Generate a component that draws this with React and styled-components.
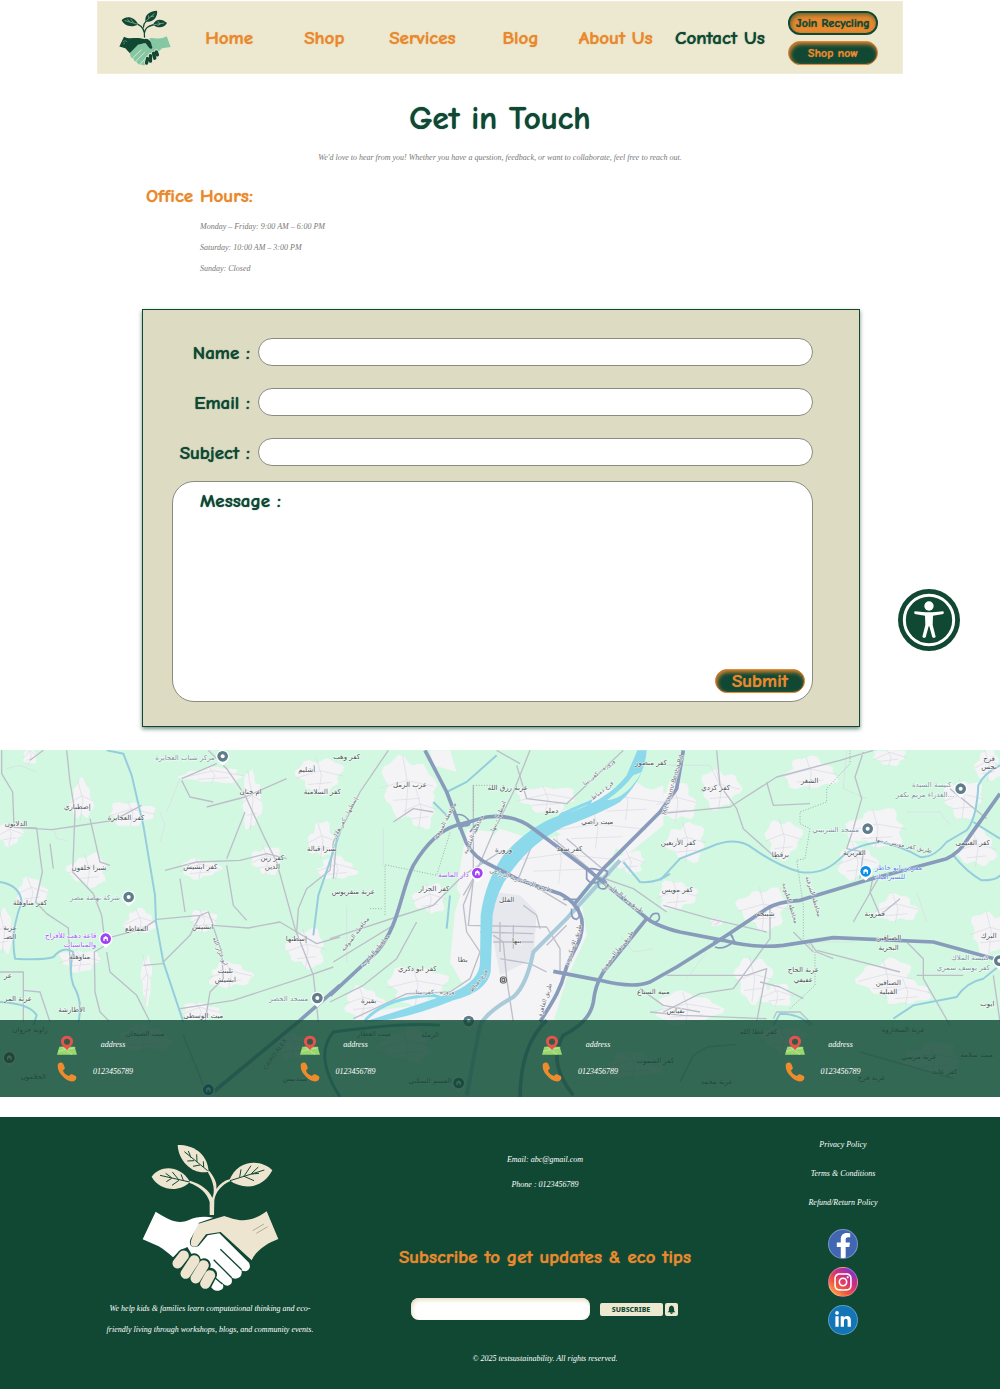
import React from "react";
import styled, { createGlobalStyle, css } from "styled-components";
import { FaFacebookF, FaInstagram, FaLinkedinIn } from "react-icons/fa";

const GREEN = "#104834";
const ORANGE = "#e8892f";
const CREAM = "#ede8d0";

const GlobalStyle = createGlobalStyle`
  * {
    box-sizing: border-box;
  }

  body {
    margin: 0;
    background: #fff;
    color: ${GREEN};
    font-family: Gabriola, "Liberation Serif", serif;
  }

  p, h1, h2, ul {
    margin: 0;
    padding: 0;
  }
`;

const comic = css`
  font-family: "Comic Sans MS", "Comic Neue", "Noto Sans", sans-serif;
  font-weight: 700;
  text-shadow: 0 0 1px currentColor;
`;

const script = css`
  font-family: Gabriola, "Liberation Serif", serif;
  font-style: italic;
  font-size: 8px;
`;

/* ---------- header ---------- */

const Header = styled.header`
  display: flex;
  align-items: center;
  height: 73px;
  margin: 1px 97px 0;
  padding: 1px 24px 0 21px;
  background: ${CREAM};
  border: 1px solid #f1ecd8;
`;

const Nav = styled.nav`
  flex: 1;
  display: grid;
  grid-template-columns: 94fr 96fr 100fr 96fr 94fr 114fr;
  margin: 0 11px;
`;

const NavLink = styled.a`
  ${comic}
  font-size: 19px;
  line-height: 24px;
  text-align: center;
  white-space: nowrap;
  text-decoration: none;
  color: ${({ $active }) => ($active ? GREEN : ORANGE)};
`;

const Actions = styled.div`
  display: flex;
  flex-direction: column;
  gap: 6px;
`;

const PillButton = styled.button`
  ${comic}
  width: 90px;
  height: 24px;
  padding: 0;
  border-radius: 12px;
  font-size: ${({ $large }) => ($large ? "19px" : "12px")};
  line-height: 20px;
  white-space: nowrap;
  color: ${({ $light }) => ($light ? GREEN : ORANGE)};
  background: ${({ $light }) => ($light ? ORANGE : GREEN)};
  border: ${({ $light }) => ($light ? `2px solid ${GREEN}` : `1px solid ${ORANGE}`)};
  box-shadow: inset 1px 2px 4px ${({ $light }) => ($light ? "rgba(16, 72, 52, 0.6)" : ORANGE)};
`;

/* ---------- intro ---------- */

const Title = styled.h1`
  ${comic}
  margin-top: 23px;
  font-size: 33px;
  line-height: 42px;
  text-align: center;
`;

const Lead = styled.p`
  ${script}
  margin-top: 9px;
  line-height: 20px;
  text-align: center;
  color: #777;
`;

const Hours = styled.section`
  margin: 16px 140px 0 146px;
`;

const HoursTitle = styled.h2`
  ${comic}
  font-size: 19px;
  line-height: 24px;
  color: ${ORANGE};
`;

const HoursList = styled.ul`
  ${script}
  margin-top: 8px;
  padding-left: 54px;
  list-style: none;
  line-height: 21px;
  color: #777;
`;

/* ---------- form ---------- */

const Form = styled.form`
  display: flex;
  flex-direction: column;
  gap: 22px;
  margin: 30px 140px 0 142px;
  padding: 28px 46px 24px 29px;
  background: #dddcc3;
  border: 1px solid ${GREEN};
  box-shadow: 0 2px 4px rgba(16, 72, 52, 0.6);
`;

const Field = styled.div`
  display: grid;
  grid-template-columns: 78px 1fr;
  column-gap: 8px;
  align-items: center;
`;

const Label = styled.label`
  ${comic}
  padding-top: 2px;
  font-size: 19px;
  line-height: 24px;
  text-align: right;
  white-space: nowrap;
`;

const TextInput = styled.input`
  width: 100%;
  height: 28px;
  padding: 0 14px;
  border: 1px solid #8b8b80;
  border-radius: 14px;
  background: #fff;
  font-size: 14px;
`;

const MessageBox = styled.div`
  display: flex;
  flex-direction: column;
  align-items: flex-start;
  min-height: 221px;
  margin-top: -7px;
  padding: 5px 7px 8px 27px;
  border: 1px solid #8b8b80;
  border-radius: 22px;
  background: #fff;
`;

const MessageInput = styled.textarea`
  flex: 1;
  width: 100%;
  border: 0;
  outline: 0;
  resize: none;
  background: transparent;
  font-size: 14px;
`;

const Submit = styled(PillButton)`
  align-self: flex-end;
`;

const AccessButton = styled.button`
  position: fixed;
  top: 589px;
  right: 40px;
  width: 62px;
  height: 62px;
  padding: 0;
  border: 0;
  border-radius: 50%;
  background: ${GREEN};

  svg {
    display: block;
  }
`;

/* ---------- map ---------- */

const MapSection = styled.section`
  display: grid;
  margin-top: 23px;

  > * {
    grid-area: 1 / 1;
  }
`;

const MapSvg = styled.svg`
  display: block;
  width: 100%;
  height: auto;
  font-family: "DejaVu Sans", sans-serif;
  font-size: 21px;
`;

const Branches = styled.div`
  z-index: 1;
  align-self: end;
  display: grid;
  grid-template-columns: repeat(4, 1fr);
  height: 77px;
  padding: 11px 0 0 30px;
  background: rgba(16, 72, 52, 0.82);
`;

const Branch = styled.address`
  display: grid;
  grid-template-columns: 20px 72px;
  grid-auto-rows: 27px;
  align-items: center;
  padding-left: 27px;
`;

const BranchText = styled.span`
  ${script}
  text-align: center;
  color: #fff;
`;

/* ---------- footer ---------- */

const Footer = styled.footer`
  display: grid;
  grid-template-columns: 332fr 338fr 258fr;
  min-height: 272px;
  margin-top: 20px;
  padding: 0 28px 0 44px;
  background: ${GREEN};
  color: #fff;
`;

const Column = styled.div`
  ${script}
  display: flex;
  flex-direction: column;
  align-items: center;
  padding-top: ${({ $top }) => $top};
  text-align: center;
`;

const About = styled.p`
  max-width: 222px;
  margin-top: 7px;
  line-height: 21px;
`;

const Line = styled.p`
  line-height: 25px;
`;

const FooterLink = styled.a`
  line-height: 29px;
  color: #fff;
  text-decoration: none;
`;

const SubscribeTitle = styled.h2`
  ${comic}
  margin-top: 48px;
  font-style: normal;
  font-size: 19px;
  line-height: 24px;
  white-space: nowrap;
  color: ${ORANGE};
`;

const SubscribeRow = styled.form`
  display: flex;
  align-items: center;
  margin-top: 29px;
`;

const SubscribeInput = styled.input`
  width: 179px;
  height: 22px;
  margin-right: 10px;
  padding: 0 10px;
  border: 0;
  border-radius: 8px;
  background: #fff;
  box-shadow: inset 1px 2px 4px #e5dcbc;
`;

const SubscribeButton = styled.button`
  display: grid;
  place-items: center;
  width: ${({ $wide }) => ($wide ? "63px" : "13px")};
  height: 13px;
  margin-right: 2px;
  padding: 0;
  border: 0;
  border-radius: 2px;
  background: ${CREAM};
  color: ${GREEN};
  font-family: "Noto Sans", sans-serif;
  font-size: 7px;
  font-weight: 800;
  line-height: 13px;
`;

const Copyright = styled.p`
  margin-top: 28px;
  line-height: 21px;
`;

const Socials = styled.div`
  display: flex;
  flex-direction: column;
  gap: 8px;
  margin-top: 12px;
`;

const SocialLink = styled.a`
  display: grid;
  place-items: ${({ $low }) => ($low ? "end center" : "center")};
  width: 30px;
  height: 30px;
  border: 1px solid rgba(255, 255, 255, 0.3);
  border-radius: 50%;
  overflow: hidden;
  color: #fff;
  background: ${({ $bg }) => $bg};
`;

const HeaderLogo = () => (
  <svg width="52" height="56" viewBox="86 28 157 168" role="img" aria-label="Logo">
    <g fill="none" stroke={GREEN} strokeWidth="4" strokeLinecap="round">
      <path d="M163 109C164 90 160 78 143 71M163 96C165 82 172 76 190 72M160 79C159 71 163 66 168 61" />
    </g>
    <g fill={GREEN}>
      <path d="M94 58C106 45 132 45 144 71C124 82 100 75 94 58Z" />
      <path d="M166 62C162 44 177 31 201 30C203 50 188 67 166 62Z" />
      <path d="M188 72C196 54 215 51 231 67C221 83 203 83 188 72Z" />
    </g>
    <path d="M103 59L143 71M111 55L120 63M121 54L130 66M168 60L193 38M175 44L176 53M182 47L192 46M190 72L222 67M203 61L209 69M202 75L212 69" stroke="#b9cdb0" strokeWidth="1.8" fill="none" />
    <path d="M101 108C118 117 132 109 151 113L165 116L152 138L119 158L105 143L87 138Z" fill={GREEN} />
    <path d="M230 107C211 119 192 111 178 112L186 144L201 158L216 143L242 139Z" fill="#86c7a3" />
    <path d="M119 157L144 132L163 127L178 139L203 153L194 171L166 193Q158 197 153 191Q143 194 139 184Q131 183 129 174Q120 172 119 157Z" fill="#86c7a3" />
    <path d="M128 172L154 147M137 182L164 155M151 190L173 165" stroke={CREAM} strokeWidth="2.5" />
    <path d="M148 127L166 114Q178 115 182 125L187 142Q181 149 174 138L166 128Q157 126 148 132Z" fill={GREEN} />
    <g stroke={CREAM} strokeWidth="14" strokeLinecap="round">
      <path d="M173 173L169 187M181 164L180 181M190 158L193 172M199 153L202 162" />
    </g>
    <g stroke={GREEN} strokeWidth="10" strokeLinecap="round">
      <path d="M172 174L169 188M181 165L181 182M190 158L194 173M199 154L202 163" />
    </g>
    <path d="M97 124l8-4 6 4M99 130l5-3" stroke="#86c7a3" strokeWidth="1.5" fill="none" />
  </svg>
);

const FooterLogo = () => (
  <svg width="137" height="147" viewBox="185 70 411 441" role="img" aria-label="Logo">
    <g fill="#ede5cf">
      <path d="M214 168C238 134 296 130 329 183C299 215 239 213 214 168Z" />
      <path d="M292 73C333 72 381 94 385 153C342 164 295 127 292 73Z" />
      <path d="M576 149C548 118 474 110 447 179C488 209 547 205 576 149Z" />
      <path d="M388 283V244C380 217 359 198 326 186L329 180C363 190 388 210 396 232C404 213 402 187 382 153L387 151C407 176 410 192 408 205C418 190 432 180 448 176L450 181C425 192 406 213 402 238L401 283Z" />
      <path d="M349 311L432 286C460 295 500 316 559 272L594 355C561 367 526 390 514 419L421 334L377 341L350 377Q328 383 332 361Z" />
    </g>
    <g fill="none" stroke={GREEN} strokeWidth="3">
      <path d="M239 164L328 184M256 158L274 171M276 154L295 177M302 161L309 179M258 183L274 173M275 194L296 179M312 93L382 150M324 91L332 111M349 101L350 124M321 121L341 120M338 137L359 133M369 122L370 139M552 148L449 180M534 139L513 159M512 135L492 165M482 146L478 170M536 158L514 160M521 180L489 166" />
    </g>
    <path d="M226 273C267 299 293 311 324 299C351 287 374 287 399 291L356 306L330 357C324 377 339 384 355 376L382 344L417 338L506 426Q514 443 499 451Q488 453 483 447Q489 471 465 474Q457 474 452 469Q461 491 442 495Q432 495 423 484Q438 505 415 510Q396 512 389 492L321 379L302 388L278 410C267 400 251 386 235 377L187 356Z" fill="#fff" />
    <path d="M420 386L484 447M400 417L454 471M397 465L426 490" stroke={GREEN} strokeWidth="4" />
    <path d="M517 330L551 310M528 338L562 318" stroke="#8b927b" strokeWidth="2" />
    <g stroke={GREEN} strokeWidth="40" strokeLinecap="round">
      <path d="M311 404L291 428M341 418L315 459M371 433L346 473M390 461L376 488" />
    </g>
    <g stroke="#ede5cf" strokeWidth="31" strokeLinecap="round">
      <path d="M310 405L292 428M342 419L316 459M370 434L346 473M389 464L375 489" />
    </g>
  </svg>
);

const AccessIcon = () => (
  <svg width="62" height="62" viewBox="0 0 186 186" aria-hidden="true">
    <circle cx="93" cy="93" r="74" fill="none" stroke="#fff" strokeWidth="9" />
    <circle cx="93" cy="51" r="14" fill="#fff" />
    <path d="M50 67L82 70H104L136 67Q139 71 136 75L105 80L104 108L113 143Q109 149 103 145L94 112H92L83 145Q77 149 73 143L82 108L81 80L50 75Q47 71 50 67Z" fill="#fff" />
  </svg>
);

const AddressIcon = () => (
  <svg width="20" height="20" viewBox="0 0 60 60" aria-hidden="true">
    <path d="M7 35H53L60 59H0Z" fill="#9ad86d" />
    <path d="M3 49L25 44L55 38M14 35L45 59" stroke="#c9efaa" strokeWidth="2" />
    <path d="M30 2C18 2 11 11 12 21C13 33 27 38 30 47C33 38 47 33 48 21C49 11 42 2 30 2Z" fill="#e5534f" />
    <circle cx="30" cy="20" r="9" fill="#315b45" />
  </svg>
);

const PhoneIcon = () => (
  <svg width="20" height="20" viewBox="0 0 60 60" aria-hidden="true">
    <path d="M3 5Q14-2 19 6L23 16Q25 21 18 25Q21 38 36 42Q40 35 45 37L56 42Q62 51 52 57Q36 62 19 45Q-2 25 3 5Z" fill="#ee8b2d" />
  </svg>
);

const BellIcon = () => (
  <svg width="9" height="9" viewBox="0 0 24 24" aria-hidden="true">
    <path d="M12 1C7 2 5 6 5 11V15L2 19H22L19 15V11C19 6 17 2 12 1ZM8 20C9 25 15 25 16 20Z" fill={GREEN} />
  </svg>
);

// [cx, cy, rx, ry] of the built-up areas
const towns = [
  [245, 165, 35, 60], [395, 205, 70, 38], [265, 375, 60, 50], [95, 440, 48, 42], [30, 265, 40, 36],
  [640, 90, 95, 24], [755, 165, 30, 90], [960, 90, 70, 55], [965, 285, 42, 55], [600, 370, 60, 30],
  [800, 345, 46, 44], [420, 530, 48, 38], [610, 525, 40, 34], [920, 610, 58, 60], [690, 690, 66, 40],
  [240, 645, 62, 34], [10, 560, 30, 66], [600, 800, 60, 28], [440, 700, 16, 75], [90, 30, 20, 30],
  [1220, 120, 80, 90], [1260, 190, 50, 60], [1010, 370, 60, 35], [1250, 720, 90, 60], [1290, 460, 50, 45],
  [1090, 770, 60, 45], [1640, 160, 90, 40], [1880, 170, 120, 55], [1790, 250, 150, 60], [1680, 340, 160, 75],
  [2030, 170, 60, 60], [2160, 130, 60, 60], [2060, 290, 60, 60], [2430, 85, 80, 50], [2350, 280, 55, 60],
  [2630, 250, 90, 60], [2570, 350, 60, 55], [2890, 160, 60, 60], [2930, 310, 60, 55], [2030, 450, 60, 45],
  [2290, 490, 75, 65], [2690, 490, 65, 42], [2970, 560, 60, 65], [2660, 700, 85, 60], [2720, 740, 70, 40],
  [2260, 700, 55, 70], [2330, 750, 50, 35], [2060, 790, 100, 50], [2670, 35, 50, 25], [2965, 60, 40, 50],
  [2150, 530, 20, 14], [1890, 350, 45, 35], [430, 880, 90, 40], [880, 900, 60, 40], [1220, 900, 80, 50],
  [1900, 960, 90, 40], [2350, 880, 70, 40], [2800, 940, 90, 50],
];

const blob = ([cx, cy, rx, ry], seed) =>
  Array.from({ length: 30 }, (_, i) => {
    const a = (i / 30) * Math.PI * 2;
    const r = 0.92 + 0.14 * Math.sin(seed * 2.3 + a * 3) + 0.11 * Math.sin(seed * 5.1 + a * 7);
    return `${Math.round(cx + Math.cos(a) * rx * r)},${Math.round(cy + Math.sin(a) * ry * r)}`;
  }).join(" ");

const lanes = [
  "M5 15V85L38 140L42 246L110 248L120 330L127 380L107 470L140 505L205 548L212 690",
  "M42 246L155 253L230 242L340 225L425 180",
  "M200 15L210 110L225 200L218 380L280 445L305 510L316 600L283 620L285 740L300 800L330 830",
  "M316 580L430 550L470 522L600 510L625 500L640 540L745 548L840 530L890 560L950 595L1020 575",
  "M625 15L680 70L735 150L790 270L830 350L885 550L940 690L955 830",
  "M680 340L735 200M495 375L590 350L720 345L800 325L860 340M620 185L735 155L860 100",
  "M545 100L650 55M545 105L570 155L640 170M890 560L895 490L920 430L990 375L1000 290L1020 250",
  "M640 545L665 620L670 700L630 740L615 830M490 650L570 570L600 510M430 660L490 655",
  "M320 620L330 680L410 750L450 830M130 15L90 45M150 295L160 370M270 220L300 350L330 360",
  "M680 360L700 480L740 525M540 400L555 500M540 790L700 765L900 700L1000 665M0 680H70V830M70 735L120 740L150 830",
  "M1165 15L1080 140L1010 280L1000 400M1590 15L1540 140L1480 260L1420 400L1390 450M1300 200L1240 190L1180 230",
  "M1420 120V400L1405 540L1640 545L1680 610L1680 680M990 580L1190 515L1300 480L1390 390L1500 320",
  "M1000 650L1180 540M1250 530L1190 640L1090 720L990 770M1490 15L1560 55M1550 60L1580 160L1700 175L1870 15",
  "M1690 200L1600 290L1555 400M1660 280L1780 380M1830 390L1700 280M1800 395L1900 430L2000 500",
  "M1060 820L1220 745L1350 740L1410 700L1440 620L1400 560L1390 480L1430 380",
  "M1480 570L1510 590L1520 700L1540 830M1500 640L1590 655L1640 680M1570 480L1610 510L1620 550",
  "M1980 205L2190 185L2330 95L2520 45L2620 15M2590 20L2565 95L2585 160L2560 250L2540 310L2590 320L2580 400",
  "M2150 15L2160 120L2210 190L2230 250L2330 340M2300 110L2320 180L2430 175M2620 390L2610 440L2640 510L2700 460",
  "M2310 490L2310 580L2200 730L2100 745L1990 800M2000 690L2240 690L2300 670L2270 830M2450 615L2700 680",
  "M2280 710L2340 725L2410 760M2440 620L2380 560M2430 590L2450 620L2500 640M2640 390L2560 530",
  "M2720 590L2770 640L2770 700L2850 840M2980 690L3000 830M1920 730L1990 780L2100 800M1950 800L2050 810L2300 820",
  "M2320 820L2330 800L2400 800L2440 840M2850 130L2960 220M2750 690L2890 690M1990 480L2130 520L2300 560",
  "M550 870L610 1020M2120 905L2080 930L2040 1010M2120 905L2210 897M2580 920L2860 1000",
  "M1440 560L1600 565M1500 530V620M1540 540V610M1480 590H1600M1600 420L1700 480M1700 540L1640 600",
];

const highways = [
  "M1275 15L1340 140L1390 270Q1405 320 1450 348L1560 405L1680 445Q1730 470 1745 520C1755 590 1710 620 1695 680C1680 740 1650 780 1620 830",
  "M990 750L1130 620C1200 540 1200 440 1240 360Q1300 260 1370 240L1460 215Q1540 205 1600 250L1760 370L1930 510Q1960 540 2040 560L2170 585Q2260 610 2350 600L2500 577L2800 590L3000 645",
  "M2050 15L2030 130L1980 200L1810 370L1720 480",
  "M1660 678L1800 705Q1900 730 1950 710L2030 665L2150 590L2300 490Q2330 470 2400 465L2600 405L2840 340Q2880 320 2900 285L3000 145",
  "M1940 520L1810 680Q1785 720 1780 770Q1770 830 1690 870Q1640 950 1720 1050",
  "M1020 720L900 825L640 1040",
  "M1640 825Q1560 900 1560 1060",
];

const loops = [
  "M1365 210Q1390 200 1410 230Q1410 250 1375 235ZM1375 250L1430 222M1410 260L1430 235",
  "M1760 375Q1770 365 1800 375Q1830 370 1820 390Q1780 430 1760 400ZM1795 405Q1790 435 1815 430Q1830 420 1810 400",
  "M1690 462H1735M1715 490Q1710 520 1730 522Q1745 515 1735 485M1950 520Q1955 500 1975 505Q1985 525 1965 530",
  "M2140 590L2190 565Q2200 570 2200 590Q2170 615 2145 605M2190 565L2210 598",
];

const canals = [
  "M0 410Q60 420 65 470Q30 560 45 640Q130 645 160 635Q190 600 220 620Q205 680 220 720Q250 770 235 830",
  "M320 15L370 25L395 90L430 240L465 450L468 530L490 650L550 830",
  "M0 770Q90 775 110 810L100 840M1020 260L955 450L940 570M2860 330Q2900 380 2945 405Q2990 405 3000 390",
  "M1980 405L2040 340L2130 305Q2210 270 2260 310Q2330 360 2400 380Q2470 390 2520 340Q2560 300 2640 290Q2700 300 2760 335Q2800 340 2840 290L2900 255Q2930 220 2935 120Q2950 85 3000 60",
  "M1870 350L1920 410Q1970 415 2010 385M2680 820L2740 780L2870 755Q2900 710 2950 700L3000 660M2920 230L3000 280M2320 840L2340 805Q2400 805 2430 840",
  "M1490 30L1400 110L1340 140M1340 550L1350 450M1300 170L1340 210",
];

// [x, y, text, colour]
const places = [
  [555, 44, "مركز شباب العجايزة", "#78909c"], [920, 80, "أشليم"], [752, 146, "ام خنان"], [967, 146, "كفر السلامية"],
  [232, 192, "إصطباري"], [378, 224, "كفر العجايزة"], [48, 242, "الدلاتون"], [267, 373, "شبرا خلفون"],
  [601, 370, "كفر ابشيش"], [817, 344, "كفر زين"], [817, 372, "الدين"], [965, 318, "شبرا قبالة"],
  [90, 478, "كفر مناوهلة"], [285, 465, "شركة نهضة مصر", "#78909c"], [212, 578, "قاعة دهب للأفراح", "#a855f7"],
  [240, 606, "والمناسبات", "#a855f7"], [410, 558, "المقاطع"], [608, 550, "ابشيش"], [889, 587, "إسطنها"],
  [239, 640, "مناوهلة"], [676, 682, "تلبنت"], [676, 710, "ابشيش"], [30, 555, "عزبة"], [30, 581, "الضـ"], [54, 768, "عزبة المر"],
  [215, 800, "الأطارشة"], [610, 817, "ميت الوسطى"], [866, 768, "مسجد الخضر", "#78909c"], [24, 699, "عز"],
  [1230, 126, "عرب الرمل"], [1523, 134, "عزبة رزق الله"], [1655, 203, "دملو"], [1792, 236, "ميت راضي"],
  [1953, 58, "كفر منصور"], [1708, 316, "كفر سعد"], [1511, 320, "ورورة"], [1360, 394, "دار الماسة", "#a855f7"],
  [1302, 438, "كفر الجزار"], [1060, 446, "عزبة منقريوس"], [1520, 471, "الفلل"], [1550, 593, "بنها"],
  [1388, 651, "بطا"], [1252, 676, "كفر ابو ذكري"], [1106, 773, "بقيرة"], [1960, 745, "منيه السباع"],
  [1040, 42, "كفر وهب"], [2147, 134, "كفر كردي"], [2429, 112, "الشغر"], [2795, 126, "كنيسة السيدة", "#78909c"],
  [2775, 154, "العذراء مريم بكفر...", "#78909c"], [2507, 260, "مسجد الشربيني", "#78909c"], [2035, 300, "كفر الأربعين"],
  [2341, 334, "برقطا"], [2563, 330, "العزيزية"], [2918, 298, "كفر الغنيمى"], [2696, 374, "معرض ابو خاطر", "#5b83e8"],
  [2670, 402, "للسيراميك", "#5b83e8"], [2032, 440, "كفر مويس"], [2296, 511, "شبنجة"], [2624, 512, "قمرونة"],
  [2666, 585, "الصنافين"], [2666, 613, "البحرية"], [2410, 681, "عزبة الحاج"], [2410, 709, "عفيفي"],
  [2665, 718, "الصنافين"], [2665, 746, "القبلية"], [2910, 644, "كنيسة الملاك", "#78909c"],
  [2890, 673, "كفر يوسف سمري", "#78909c"], [2966, 579, "البرك"], [2967, 46, "فرج"], [2967, 72, "نجس"],
  [2027, 802, "تفياس"], [2962, 782, "ايوب"], [90, 860, "زاوية جروان"], [435, 873, "ميت الصيحان"], [100, 1000, "الحلامون"],
  [1122, 873, "ميت العطار"], [1290, 875, "الرملة"], [885, 1008, "سندبيس"], [1290, 1013, "القسم السكني"],
  [1966, 952, "كفر الشموت"], [2276, 867, "كفر عطا الله"], [2710, 860, "عزبة السحاروة"], [2150, 1015, "عزبة محمد"],
  [2757, 940, "عزبة مرسي"], [2835, 985, "كفر عابد"], [2615, 1005, "عزبة فرج"], [2930, 936, "ميت سلامة"],
];

// [x, y, angle, text] of names that follow a road or a border
const roadNames = [
  [1070, 570, -52, "محافظة المنوفية"], [1130, 620, -50, "محافظة القليوبية"], [1340, 230, -62, "محافظة المنوفية"],
  [1425, 270, -66, "محافظة القليوبية"], [2365, 475, 73, "محافظة القليوبية"], [2435, 455, 73, "محافظة الشرقية"],
  [1040, 220, -62, "إسطنها - كفر هلال"], [1500, 215, -68, "اسطنها - بنها"], [1800, 85, -38, "ورورة - كفر بيتا"],
  [1305, 747, 0, "ورورة - كفر بيتا"], [1560, 410, 18, "طريق الإسكندرية الزراعي"], [1725, 600, -72, "طريق الإسكندرية"],
  [1855, 620, -52, "طريق بنها المنصورة"], [1870, 460, 38, "طريق بنها الزقازيق"], [2024, 120, -74, "Mit Ghamr-Benha Rd"],
  [2710, 305, 12, "طريق كفر مويس - بنها"], [655, 620, 68, "ابو عرار الله"], [1810, 140, -38, "فرع دمياط"], [1440, 710, -52, "فرع دمياط"],
  [1640, 765, -72, "طريق القاهرة"], [830, 930, -55, "CAIRO ALEX"],
];

const pins = [
  [668, 33, "#607d8b"], [386, 455, "#607d8b"], [317, 580, "#a142f4"], [952, 758, "#607d8b"], [1432, 383, "#a142f4"],
  [2882, 130, "#607d8b"], [2603, 250, "#607d8b"], [2597, 378, "#0b8de8"], [2998, 646, "#607d8b"], [1406, 827, "#607d8b"],
  [28, 937, "#7a2f2f"], [625, 1033, "#3949ab"], [1376, 1013, "#455a64"],
];

const AreaMap = () => (
  <MapSvg viewBox="0 14 3000 1041" role="img" aria-label="Map of Benha">
    <rect y="14" width="3000" height="1041" fill="#d3f8e2" />
    <g fill="#f4f3f6">
      {towns.map((town, i) => (
        <polygon key={i} points={blob(town, i)} />
      ))}
      <path d="M1365 500L1420 330L1500 250L1620 290L1760 240L1890 200L1820 380L1740 440L1760 570L1700 700L1660 830L1050 830L1100 800L1250 780L1390 720L1350 650Z" />
      <path d="M1400 250L1480 260L1480 420L1400 480L1370 430Z" />
      <path d="M1290 15H1350L1370 80L1300 60ZM1860 170L1990 120V240L1880 330L1790 270Z" />
    </g>
    <path d="M1480 440L1560 450L1610 500L1600 640L1500 690L1475 560Z" fill="#e6e8ee" />
    <g fill="none" stroke="#d9dbe2" strokeWidth="2">
      {towns.map(([x, y, rx, ry], i) => (
        <path key={i} d={`M${x - rx} ${y + 8}l${rx} -22l${rx} 16M${x - 12} ${y - ry}l16 ${ry}l-8 ${ry}M${x - rx / 2} ${y + ry / 2}l${rx} -6`} />
      ))}
      <path d="M20 70L60 60L110 80M160 250L170 280L200 285M480 200L495 240L480 290M540 100L500 200M2540 15L2530 130L2600 160M2000 60H2130L2160 120M2430 590H2560M1860 570L1900 620L1960 610M2720 200H2820L2850 240M2120 620L2060 700M2750 440L2780 530M1040 480V650M1150 250V360" />
    </g>
    <g fill="none" stroke="#bcbfc9" strokeWidth="4" strokeLinejoin="round">
      {lanes.map((d) => (
        <path key={d} d={d} />
      ))}
    </g>
    <path d="M1420 120H1490M1420 120V200M1350 262L1310 390L1155 358V510M1110 490H1150M2550 15V55L2480 130V170L2400 200V235L2430 250L2415 340L2390 345L2410 480V580L2445 615V720L2370 790" fill="none" stroke="#a0aab0" strokeWidth="3" strokeDasharray="3 5" />
    <g fill="none" stroke="#96cddd" strokeWidth="6">
      {canals.map((d) => (
        <path key={d} d={d} />
      ))}
    </g>
    <path d="M1912 15H1940Q1935 100 1860 170Q1800 205 1690 245Q1600 290 1540 370Q1490 430 1478 510L1472 680Q1460 740 1360 765Q1200 830 1090 830Q1280 770 1360 740Q1440 705 1440 650L1442 510Q1455 410 1510 330Q1590 240 1680 210Q1820 170 1880 90Z" fill="#8cd9eb" />
    <path d="M1925 80Q1880 160 1820 165Q1870 130 1900 90Z" fill="#d3f8e2" />
    <path d="M1095 825Q1160 755 1300 750L1350 765M1765 180L1770 170Q1710 195 1680 210" fill="none" stroke="#8cd9eb" strokeWidth="9" />
    <path d="M1860 345L1700 520L1600 620Q1580 720 1540 755Q1460 800 1440 840L1400 1050" fill="none" stroke="#a9cbd9" strokeWidth="12" />
    <g fill="none" stroke="#899bbb" strokeWidth="11" strokeLinejoin="round">
      {highways.map((d) => (
        <path key={d} d={d} />
      ))}
    </g>
    <path d="M1320 840Q1220 830 1000 860Q940 930 1020 1055" fill="none" stroke="#72aab5" strokeWidth="9" />
    <g fill="none" stroke="#899bbb" strokeWidth="5">
      {loops.map((d) => (
        <path key={d} d={d} />
      ))}
    </g>
    <g textAnchor="middle" stroke="#fff" strokeWidth="3" strokeOpacity="0.8" paintOrder="stroke">
      {places.map(([x, y, text, colour]) => (
        <text key={`${x}-${y}`} x={x} y={y} fill={colour || "#4b5357"}>
          {text}
        </text>
      ))}
      {roadNames.map(([x, y, angle, text]) => (
        <text key={`${x}-${y}`} transform={`translate(${x} ${y}) rotate(${angle})`} fontSize="18" fill="#6c7680">
          {text}
        </text>
      ))}
    </g>
    {pins.map(([x, y, colour]) => (
      <g key={`${x}-${y}`} transform={`translate(${x} ${y})`}>
        <path d="M0 28L-12 17A20 20 0 1 1 12 17Z" fill="#fff" />
        <circle r="16" fill={colour} />
        {colour === "#607d8b" ? <circle r="6" fill="#fff" /> : <path d="M-7 7V-3L0-8L7-3V7H3V1H-3V7Z" fill="#fff" />}
      </g>
    ))}
    <g transform="translate(1510 704)" fill="none" stroke="#555" strokeWidth="3">
      <rect x="-9" y="-9" width="18" height="18" rx="6" />
      <rect x="-4" y="-4" width="8" height="8" />
    </g>
  </MapSvg>
);

const links = ["Home", "Shop", "Services", "Blog", "About Us", "Contact Us"];
const fields = ["Name", "Email", "Subject"];
const branches = [1, 2, 3, 4];

const App = () => {
  return (
    <>
      <GlobalStyle />
      <Header>
        <HeaderLogo />
        <Nav>
          {links.map((link) => (
            <NavLink key={link} href="#" $active={link === "Contact Us"}>
              {link}
            </NavLink>
          ))}
        </Nav>
        <Actions>
          <PillButton type="button" $light>Join Recycling</PillButton>
          <PillButton type="button">Shop now</PillButton>
        </Actions>
      </Header>

      <main>
        <Title>Get in Touch</Title>
        <Lead>
          We'd love to hear from you! Whether you have a question, feedback, or want to collaborate, feel free to reach out.
        </Lead>

        <Hours>
          <HoursTitle>Office Hours:</HoursTitle>
          <HoursList>
            <li>Monday – Friday: 9:00 AM – 6:00 PM</li>
            <li>Saturday: 10:00 AM – 3:00 PM</li>
            <li>Sunday: Closed</li>
          </HoursList>
        </Hours>

        <Form>
          {fields.map((field) => (
            <Field key={field}>
              <Label htmlFor={field}>{field} :</Label>
              <TextInput id={field} name={field} />
            </Field>
          ))}
          <MessageBox>
            <Label htmlFor="message">Message :</Label>
            <MessageInput id="message" name="message" />
            <Submit type="submit" $large>Submit</Submit>
          </MessageBox>
        </Form>

        <MapSection>
          <AreaMap />
          <Branches>
            {branches.map((branch) => (
              <Branch key={branch}>
                <AddressIcon />
                <BranchText>address</BranchText>
                <PhoneIcon />
                <BranchText>0123456789</BranchText>
              </Branch>
            ))}
          </Branches>
        </MapSection>
      </main>

      <AccessButton type="button" aria-label="Accessibility options">
        <AccessIcon />
      </AccessButton>

      <Footer>
        <Column $top="27px">
          <FooterLogo />
          <About>
            We help kids &amp; families learn computational thinking and eco-friendly living through workshops, blogs, and community events.
          </About>
        </Column>
        <Column $top="30px">
          <Line>Email: abc@gmail.com</Line>
          <Line>Phone : 0123456789</Line>
          <SubscribeTitle>Subscribe to get updates &amp; eco tips</SubscribeTitle>
          <SubscribeRow>
            <SubscribeInput type="email" aria-label="Email address" />
            <SubscribeButton type="submit" $wide>SUBSCRIBE</SubscribeButton>
            <SubscribeButton type="button" aria-label="Notifications">
              <BellIcon />
            </SubscribeButton>
          </SubscribeRow>
          <Copyright>© 2025 testsustainability. All rights reserved.</Copyright>
        </Column>
        <Column $top="13px">
          <FooterLink href="#">Privacy Policy</FooterLink>
          <FooterLink href="#">Terms &amp; Conditions</FooterLink>
          <FooterLink href="#">Refund/Return Policy</FooterLink>
          <Socials>
            <SocialLink href="#" aria-label="Facebook" $bg="#4267b2" $low>
              <FaFacebookF size={25} />
            </SocialLink>
            <SocialLink
              href="#"
              aria-label="Instagram"
              $bg="linear-gradient(40deg, #fdb54e 5%, #f0543f 35%, #d32e7c 60%, #7a35c8 90%)"
            >
              <FaInstagram size={20} />
            </SocialLink>
            <SocialLink href="#" aria-label="LinkedIn" $bg="#1275b5">
              <FaLinkedinIn size={18} />
            </SocialLink>
          </Socials>
        </Column>
      </Footer>
    </>
  );
};

export default App;
